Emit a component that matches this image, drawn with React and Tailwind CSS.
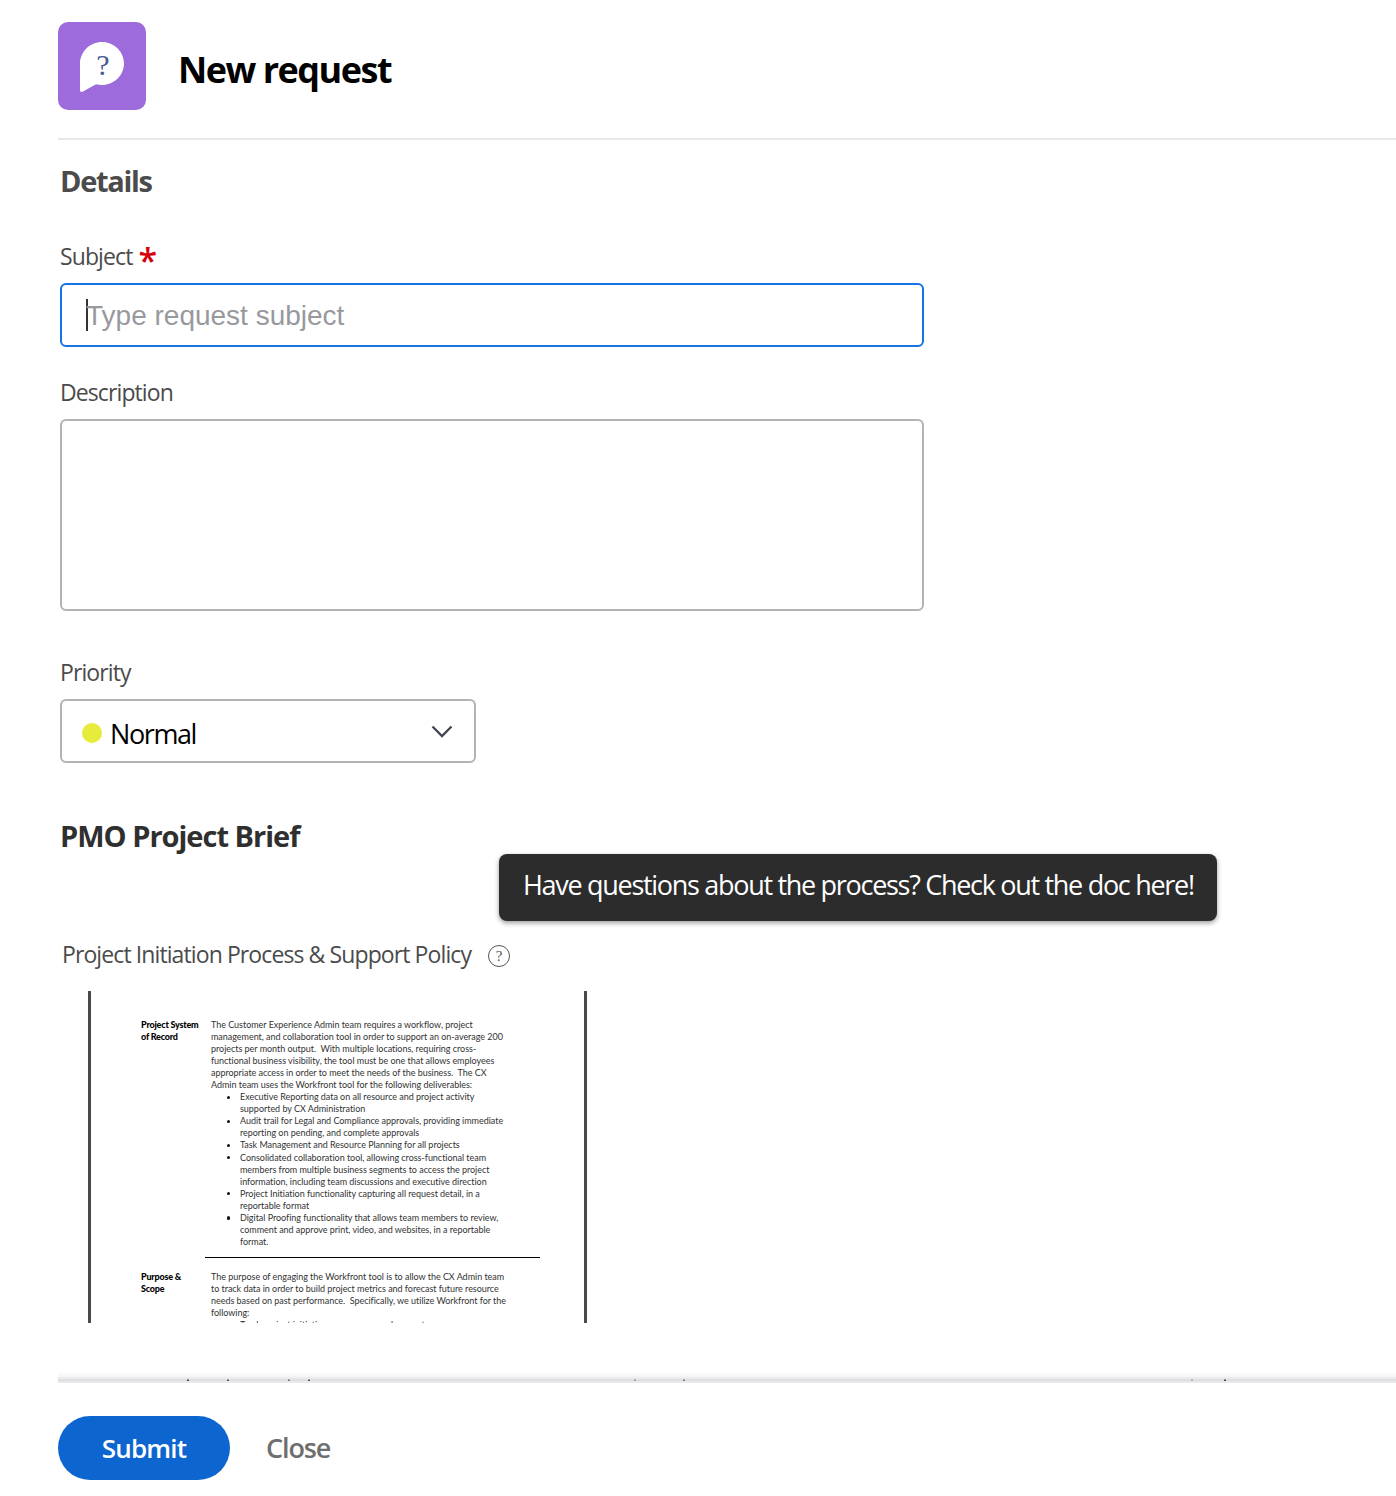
function Label({ children, className = "" }) {
  return <div className={`font-['Open_Sans',sans-serif] text-[23px] leading-[30px] tracking-[-0.9px] text-[#4b4b4b] ${className}`}>{children}</div>;
}

const rows = [
  { t: "The Customer Experience Admin team requires a workflow, project", h: "Project System" },
  { t: "management, and collaboration tool in order to support an on-average 200", h: "of Record" },
  { t: "projects per month output.  With multiple locations, requiring cross-" },
  { t: "functional business visibility, the tool must be one that allows employees" },
  { t: "appropriate access in order to meet the needs of the business.  The CX" },
  { t: "Admin team uses the Workfront tool for the following deliverables:" },
  { t: "Executive Reporting data on all resource and project activity", b: true },
  { t: "supported by CX Administration", i: true },
  { t: "Audit trail for Legal and Compliance approvals, providing immediate", b: true },
  { t: "reporting on pending, and complete approvals", i: true },
  { t: "Task Management and Resource Planning for all projects", b: true },
  { t: "Consolidated collaboration tool, allowing cross-functional team", b: true },
  { t: "members from multiple business segments to access the project", i: true },
  { t: "information, including team discussions and executive direction", i: true },
  { t: "Project Initiation functionality capturing all request detail, in a", b: true },
  { t: "reportable format", i: true },
  { t: "Digital Proofing functionality that allows team members to review,", b: true },
  { t: "comment and approve print, video, and websites, in a reportable", i: true },
  { t: "format.", i: true },
];

const rows2 = [
  { t: "The purpose of engaging the Workfront tool is to allow the CX Admin team", h: "Purpose &" },
  { t: "to track data in order to build project metrics and forecast future resource", h: "Scope" },
  { t: "needs based on past performance.  Specifically, we utilize Workfront for the" },
  { t: "following:" },
  { t: "Track project initiation across approved requests", b: true },
];

const specks = [[129, "#444"], [169, "#555"], [230, "#777"], [250, "#555"], [576, "#999"], [625, "#777"], [1133, "#aaa"], [1166, "#444"]];

function DocRow({ r }) {
  return (
    <div className="flex h-[12.05px] items-center whitespace-pre text-[9px] leading-[12px] tracking-[-0.03px] text-[#333333] font-['Lato',sans-serif]">
      <div className="w-[70px] shrink-0 font-black tracking-[-0.2px] text-black">{r.h || ""}</div>
      {(r.b || r.i) && (
        <div className="flex w-[29px] shrink-0 justify-start pl-[15.5px]">
          {r.b && <span className="h-[3.5px] w-[3.5px] rounded-full bg-[#111111]" />}
        </div>
      )}
      <div>{r.t}</div>
    </div>
  );
}

export default function App() {
  return (
    <div className="flex h-[1496px] w-[1396px] flex-col overflow-hidden bg-white font-['Open_Sans',sans-serif] relative">
      <div className="ml-[58px] h-[1372px] shrink-0 overflow-hidden">
        <header className="flex h-[140px] items-start border-b-2 border-[#e8e8e8] pt-[22px]">
          <div className="flex h-[88px] w-[88px] shrink-0 items-center justify-center rounded-[10px] bg-[#9d6bdc]">
            <svg width="46" height="52" viewBox="0 0 46 52" className="ml-[-1px] mt-[2px]">
              <path d="M1 23C1 10.800 10.800 1 23 1s22 9.800 22 21.500S35.200 44 23 44c-2.200 0-4-.2-6-.8L4 50.500c-1.500.9-3 .4-3-1.500V23z" fill="#ffffff" />
              <text x="24" y="34" textAnchor="middle" fontFamily="'Liberation Serif', serif" fontSize="30" fill="#4a5a95">?</text>
            </svg>
          </div>
          <h1 className="ml-[32px] mt-[23px] text-[36px] font-bold leading-[50px] tracking-[-1.5px] text-black">New request</h1>
        </header>

        <div className="pl-[2px]">
          <h2 className="mt-[21px] text-[29px] font-bold leading-[40px] tracking-[-1.3px] text-[#4b4b4b]">Details</h2>

          <Label className="mt-[40px]">
            Subject <span className="relative top-[8px] ml-[1px] text-[34px] font-semibold leading-[20px] text-[#d7000a]">*</span>
          </Label>
          <div className="mt-[12px] flex h-[64px] w-[864px] items-center rounded-[6px] border-2 border-[#1473e6] pl-[24px]">
            <span className="h-[32px] w-[2px] bg-[#333333]" />
            <span className="ml-[-2px] mt-[2px] font-['Liberation_Sans',sans-serif] text-[28px] text-[#98999e]">Type request subject</span>
          </div>

          <Label className="mt-[30px]">Description</Label>
          <div className="mt-[12px] h-[192px] w-[864px] rounded-[6px] border-2 border-[#b3b3b3]" />

          <Label className="mt-[46px]">Priority</Label>
          <div className="mt-[12px] flex h-[64px] w-[416px] items-center rounded-[6px] border-2 border-[#b3b3b3] px-[20px]">
            <span className="mt-[4px] h-[20px] w-[20px] rounded-full bg-[#e6eb3c]" />
            <span className="ml-[8px] mt-[6px] flex-1 text-[27px] leading-[36px] tracking-[-1.4px] text-black">Normal</span>
            <svg width="24" height="24" viewBox="0 0 24 24" fill="none" className="mt-[2px]">
              <path d="M2.500 6.500 12 16l9.500-9.500" stroke="#404454" strokeWidth="2.300" />
            </svg>
          </div>

          <h2 className="mt-[53px] text-[29px] font-bold leading-[40px] tracking-[-1px] text-[#2f2f2f]">PMO Project Brief</h2>

          <div className="ml-[2px] mt-[83px] flex items-center">
            <Label>Project Initiation Process &amp; Support Policy</Label>
            <span className="ml-[17px] mt-[4px] flex h-[22px] w-[22px] items-center justify-center rounded-full border border-[#555555] font-['Liberation_Serif',serif] text-[15px] leading-none text-[#555555]">?</span>
          </div>

          <div className="ml-[28px] mt-[22px] h-[332px] w-[499px] overflow-hidden border-x-[3px] border-[#4a4a4a] pl-[50px] pt-[28px]">
            {rows.map((r, i) => <DocRow key={i} r={r} />)}
            <div className="mb-[13px] ml-[64px] mt-[9px] h-[1px] w-[335px] bg-black" />
            {rows2.map((r, i) => <DocRow key={i} r={r} />)}
          </div>
        </div>
      </div>

      <div className="ml-[58px] h-[11px] shrink-0 border-b-2 border-[#e9e9e9] bg-gradient-to-b from-white via-[#f4f4f6] to-[#d6d9df]">
        <svg width="1338" height="9" viewBox="0 0 1338 9">
          {specks.map(([x, c]) => <rect key={x} x={x} y="7.500" width="2" height="1.500" fill={c} />)}
        </svg>
      </div>

      <footer className="flex flex-1 items-start pl-[58px] pt-[33px]">
        <button className="h-[64px] w-[172px] rounded-full bg-[#0d66d0] text-[26px] font-semibold tracking-[-0.8px] text-white">Submit</button>
        <span className="ml-[36px] mt-[13px] text-[27px] font-semibold leading-[38px] tracking-[-1.1px] text-[#6e6e6e]">Close</span>
      </footer>

      <div className="absolute left-[499px] top-[854px] flex h-[67px] w-[718px] items-center whitespace-nowrap rounded-[8px] bg-[#2c2c2c] pb-[4px] pl-[24px] text-[27px] tracking-[-1.3px] text-white shadow-[0_2px_5px_rgba(0,0,0,0.4)]">
        Have questions about the process? Check out the doc here!
      </div>
    </div>
  );
}
